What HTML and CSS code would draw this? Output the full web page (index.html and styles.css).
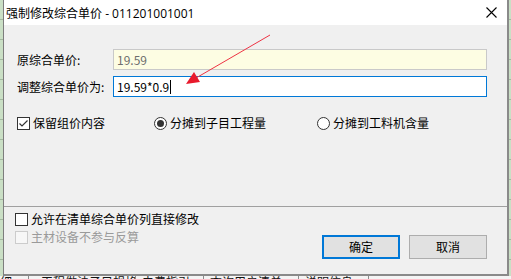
FILE: index.html
```html
<!DOCTYPE html>
<html lang="zh-CN">
<head>
<meta charset="utf-8">
<title>强制修改综合单价</title>
<link rel="stylesheet" href="styles.css">
</head>
<body>
<div class="desk">
  <div class="dialog">
    <div class="titlebar">
      <span class="title">强制修改综合单价<span class="code"> - 011201001001</span></span>
      <svg class="close" width="11" height="11" viewBox="0 0 11 11"><path d="M0.5 0.5 L10.5 10.5 M10.5 0.5 L0.5 10.5" stroke="#000" stroke-width="1.1" fill="none"/></svg>
    </div>
    <div class="main">
      <div class="field">
        <span class="label">原综合单价:</span>
        <div class="input ro">19.59</div>
      </div>
      <div class="field">
        <span class="label">调整综合单价为:</span>
        <div class="input active">19.59*0.9<span class="caret"></span></div>
      </div>
      <div class="options">
        <div class="opt">
          <svg class="box" width="13" height="13" viewBox="0 0 13 13"><rect x="0.5" y="0.5" width="12" height="12" fill="#fff" stroke="#333"/><path d="M2.5 6.5 L5 9 L10.5 3.5" stroke="#333" stroke-width="1.2" fill="none"/></svg>
          <span>保留组价内容</span>
        </div>
        <div class="opt">
          <svg class="box" width="13" height="13" viewBox="0 0 13 13"><circle cx="6.5" cy="6.5" r="6" fill="#fff" stroke="#333"/><circle cx="6.5" cy="6.5" r="3.5" fill="#333"/></svg>
          <span>分摊到子目工程量</span>
        </div>
        <div class="opt">
          <svg class="box" width="13" height="13" viewBox="0 0 13 13"><circle cx="6.5" cy="6.5" r="6" fill="#fff" stroke="#333"/></svg>
          <span>分摊到工料机含量</span>
        </div>
      </div>
    </div>
    <div class="footer">
      <div class="checks">
        <div class="opt">
          <svg class="box" width="13" height="13" viewBox="0 0 13 13"><rect x="0.5" y="0.5" width="12" height="12" fill="#fff" stroke="#333"/></svg>
          <span>允许在清单综合单价列直接修改</span>
        </div>
        <div class="opt disabled">
          <svg class="box" width="13" height="13" viewBox="0 0 13 13"><rect x="0.5" y="0.5" width="12" height="12" fill="#f7f7f7" stroke="#cccccc"/></svg>
          <span>主材设备不参与反算</span>
        </div>
      </div>
      <div class="buttons">
        <div class="btn primary">确定</div>
        <div class="btn">取消</div>
      </div>
    </div>
  </div>
  <div class="tabs">
    <span class="tab t1">明细</span>
    <span class="tab t2">工程做法子目规格</span>
    <span class="tab t3">电费指引</span>
    <span class="tab t4">查询用户清单</span>
    <span class="tab t5">说明信息</span>
  </div>
  <svg class="arrow" width="511" height="279" viewBox="0 0 511 279">
    <line x1="270" y1="35" x2="196" y2="78" stroke="#ee3344" stroke-width="1"/>
    <polygon points="186,84 194,72 200,82" fill="#e8192c"/>
  </svg>
</div>
</body>
</html>
```

FILE: styles.css
```css
html, body {
  margin: 0;
  padding: 0;
}
body {
  width: 511px;
  height: 279px;
  overflow: hidden;
  font-family: "Noto Sans CJK SC", "Noto Sans", sans-serif;
  font-size: 12px;
  color: #000;
}
.desk {
  position: relative;
  width: 511px;
  height: 279px;
  background-color: #cadfc5;
  background-image: repeating-linear-gradient(to bottom, transparent 0, transparent 19px, #a4b99f 19px, #a4b99f 20px);
  padding-left: 3px;
  box-sizing: border-box;
}
.dialog {
  width: 506px;
  height: 276px;
  box-sizing: border-box;
  background: #f0f0f0;
  border-left: 1px solid #7d7d7d;
  border-right: 2px solid #8a8a8a;
  border-bottom: 2px solid #8a8a8a;
  display: flex;
  flex-direction: column;
}
.titlebar {
  height: 25px;
  background: #fff;
  display: flex;
  align-items: center;
  justify-content: space-between;
  padding: 0 10px 0 2px;
  flex: none;
}
.title {
  font-size: 12px;
  line-height: 16px;
  padding-top: 1px;
}
.code {
  font-family: "Open Sans", "Noto Sans CJK SC", sans-serif;
}
.close {
  display: block;
}
.main {
  height: 182px;
  box-sizing: border-box;
  border-bottom: 1px solid #a0a0a0;
  padding: 24px 0 0 13px;
  flex: none;
}
.field {
  display: flex;
  align-items: center;
  height: 21px;
  margin-bottom: 6px;
}
.label {
  width: 96px;
  flex: none;
  line-height: 16px;
}
.input {
  width: 374px;
  height: 21px;
  box-sizing: border-box;
  border: 1px solid #c9c9c9;
  padding: 0 0 0 3px;
  line-height: 19px;
  display: flex;
  align-items: center;
}
.input.ro {
  background: #fdfde3;
  color: #6d6d6d;
}
.input.active {
  background: #fff;
  border-color: #0078d7;
}
.caret {
  display: inline-block;
  width: 1px;
  height: 14px;
  background: #000;
  margin-left: 1px;
}
.options {
  display: grid;
  grid-template-columns: 137px 163px auto;
  margin-top: 17px;
  height: 16px;
}
.opt {
  display: flex;
  align-items: center;
  height: 18px;
  line-height: 16px;
}
.box {
  display: block;
  flex: none;
  margin-right: 3px;
}
.opt.disabled {
  color: #9a9a9a;
}
.footer {
  flex: 1;
  display: flex;
  justify-content: space-between;
  padding: 3px 20px 0 11px;
}
.checks {
  display: flex;
  flex-direction: column;
}
.buttons {
  display: flex;
  gap: 9px;
  margin-top: 25px;
  align-self: flex-start;
}
.btn {
  width: 78px;
  height: 24px;
  box-sizing: border-box;
  background: #e1e1e1;
  border: 1px solid #adadad;
  display: flex;
  align-items: center;
  justify-content: center;
  line-height: 16px;
}
.btn.primary {
  border: 2px solid #0078d7;
}
.tabs {
  position: relative;
  margin-left: -3px;
  height: 3px;
  background: #f4f4f4;
  overflow: hidden;
  display: flex;
  font-size: 12px;
  line-height: 14px;
}
.tab {
  display: block;
  box-sizing: border-box;
  border-right: 1px solid #8c8c8c;
  padding-left: 6px;
  margin-top: -1px;
  height: 6px;
  white-space: nowrap;
  overflow: hidden;
  color: #111;
}
.t1 { width: 29px; padding-left: 0; text-indent: -12px; }
.t2 { width: 107px; padding-left: 12px; }
.t3 { width: 68px; }
.t4 { width: 95px; }
.t5 { width: 70px; }
.arrow {
  position: absolute;
  left: 0;
  top: 0;
  pointer-events: none;
}
```
